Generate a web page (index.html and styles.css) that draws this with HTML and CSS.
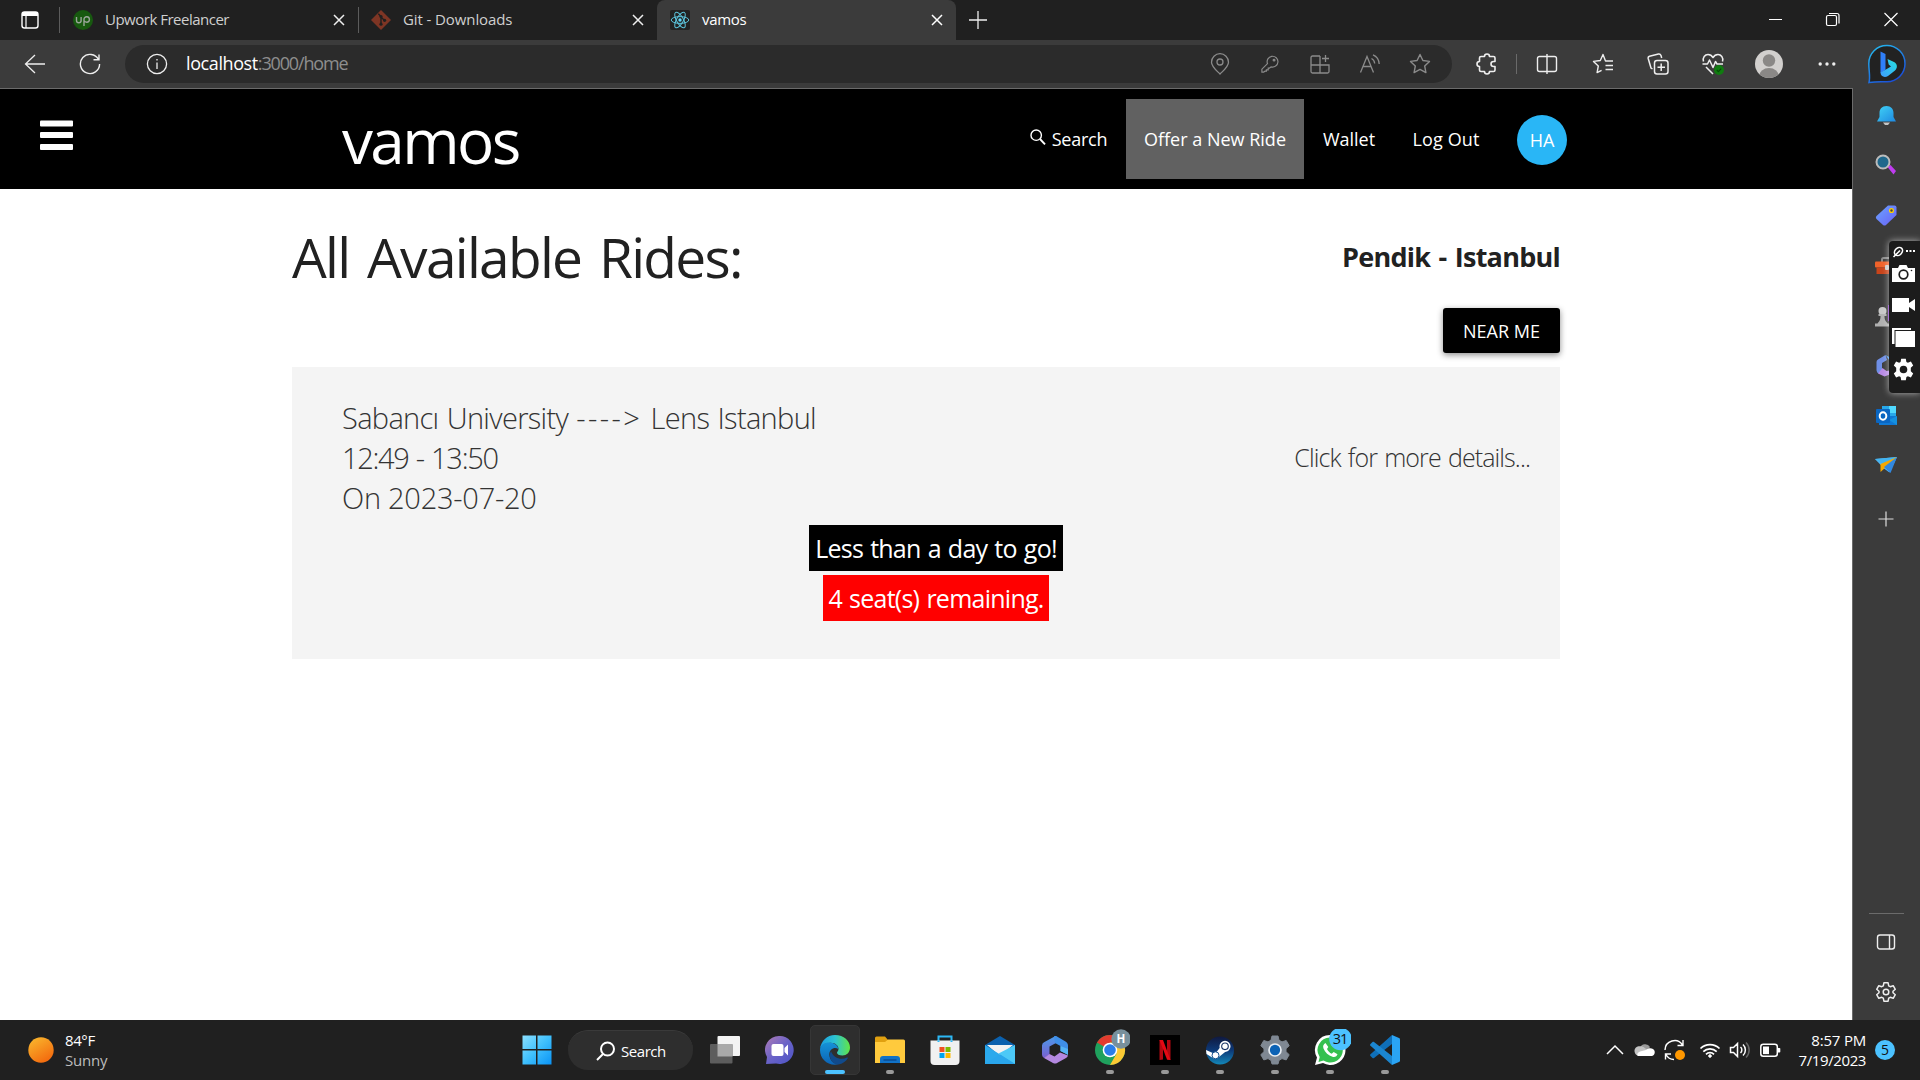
FILE: index.html
```html
<!DOCTYPE html>
<html lang="en">
<head>
<meta charset="utf-8">
<title>vamos</title>
<link rel="stylesheet" href="styles.css">
</head>
<body>
<div class="screen">

  <div class="tabstrip">
    <div class="tab-actions">
      <svg width="20" height="20" viewBox="0 0 20 20"><rect x="2" y="2" width="16" height="16" rx="2.5" fill="none" stroke="#fff" stroke-width="1.4"/><path d="M2 6V4a2 2 0 0 1 2-2h12a2 2 0 0 1 2 2v2z" fill="#fff"/><path d="M6 6v12" stroke="#fff" stroke-width="1.2"/></svg>
    </div>
    <div class="tab tab-first">
      <svg width="20" height="20" viewBox="0 0 20 20"><circle cx="10" cy="10" r="10" fill="#17590f"/><path d="M3.500 7v3.500a2.300 2.300 0 0 0 4.600 0V7M8.100 11.500V7M11 16V9.500a2.700 2.700 0 1 1 2.700 2.700c-1.200 0-2.200-.7-2.700-1.700" fill="none" stroke="#9aa69a" stroke-width="1.400"/></svg>
      <span class="tab-title upwork">Upwork Freelancer</span>
      <svg class="tab-close" width="12" height="12" viewBox="0 0 12 12"><path d="M1 1l10 10M11 1L1 11" stroke="#eee" stroke-width="1.500"/></svg>
    </div>
    <div class="tab tab-second">
      <svg width="20" height="20" viewBox="0 0 20 20"><path d="M10 0l10 10-10 10L0 10z" fill="#7e3524"/><path d="M7.300 3.800L10 6.500v8M10 7l3.500 3.500" stroke="#202020" stroke-width="1.400" fill="none"/><circle cx="10" cy="6.500" r="1.600" fill="#202020"/><circle cx="10" cy="14.200" r="1.600" fill="#202020"/><circle cx="13.600" cy="10.300" r="1.600" fill="#202020"/></svg>
      <span class="tab-title git">Git - Downloads</span>
      <svg class="tab-close" width="12" height="12" viewBox="0 0 12 12"><path d="M1 1l10 10M11 1L1 11" stroke="#eee" stroke-width="1.500"/></svg>
    </div>
    <div class="tab tab-active">
      <svg width="20" height="20" viewBox="0 0 20 20"><rect width="20" height="20" rx="2" fill="#222"/><g fill="none" stroke="#5cc4dc" stroke-width="1"><ellipse cx="10" cy="10" rx="8.800" ry="3.400"/><ellipse cx="10" cy="10" rx="8.800" ry="3.400" transform="rotate(60 10 10)"/><ellipse cx="10" cy="10" rx="8.800" ry="3.400" transform="rotate(120 10 10)"/></g><circle cx="10" cy="10" r="1.700" fill="#61dafb"/></svg>
      <span class="tab-title react">vamos</span>
      <svg class="tab-close" width="12" height="12" viewBox="0 0 12 12"><path d="M1 1l10 10M11 1L1 11" stroke="#fff" stroke-width="1.500"/></svg>
    </div>
    <svg class="new-tab" width="18" height="18" viewBox="0 0 18 18"><path d="M9 0v18M0 9h18" stroke="#eee" stroke-width="1.300"/></svg>
    <div class="window-controls">
      <svg width="58" height="38" viewBox="0 0 58 38"><path d="M23 19.500h13" stroke="#fff"/></svg>
      <svg width="58" height="38" viewBox="0 0 58 38" fill="none" stroke="#fff" stroke-width="1.200"><rect x="22.500" y="15.500" width="10" height="10" rx="1.500"/><path d="M25 13.500h8a2 2 0 0 1 2 2v8"/></svg>
      <svg width="58" height="38" viewBox="0 0 58 38"><path d="M22.500 13l13 13M35.500 13l-13 13" stroke="#fff" stroke-width="1.200"/></svg>
    </div>
  </div>

  <div class="toolbar">
    <div class="cell"><svg width="22" height="22" viewBox="0 0 22 22" fill="none" stroke="#eee" stroke-width="1.300"><path d="M21 11H1.500M11 2l-9.500 9L11 20"/></svg></div>
    <div class="cell"><svg width="22" height="22" viewBox="0 0 22 22" fill="none" stroke="#eee" stroke-width="1.400"><path d="M19.500 6.500A9.600 9.600 0 1 0 20.600 11M20 1.500v5.300h-5.500"/></svg></div>
    <div class="address">
      <svg class="info" width="22" height="22" viewBox="0 0 22 22" fill="none" stroke="#eee" stroke-width="1.300"><circle cx="11" cy="11" r="9.600"/><path d="M11 9.500v6.500M11 6v1.600"/></svg>
      <span class="url"><span class="host">localhost</span><span class="path">:3000/home</span></span>
      <div class="address-icons">
        <div class="icell"><svg width="20" height="22" viewBox="0 0 20 22" fill="none" stroke="#8b8b8b" stroke-width="1.300"><path d="M10 21C6 17 1.500 13.500 1.500 9.200a8.500 8.500 0 0 1 17 0C18.500 13.500 14 17 10 21z"/><circle cx="10" cy="9" r="3"/></svg></div>
        <div class="icell"><svg width="18" height="20" viewBox="0 0 20 20" fill="none" stroke="#8b8b8b" stroke-width="1.300"><path d="M7.200 9.500a6 6 0 1 1 4 3.700L9.500 14.500H8v2H6v1.500H4.500L3 19H1v-3.300z"/><circle cx="14.500" cy="5.700" r="1" fill="#8b8b8b"/></svg></div>
        <div class="icell"><svg width="20" height="20" viewBox="0 0 20 20" fill="none" stroke="#8b8b8b" stroke-width="1.300"><path d="M10 2H2.500A1.500 1.500 0 0 0 1 3.500v14A1.500 1.500 0 0 0 2.500 19h15a1.500 1.500 0 0 0 1.500-1.500V11H1M10 2v17M15.500 1v7M12 4.500h7"/></svg></div>
        <div class="icell"><svg width="22" height="20" viewBox="0 0 22 20" fill="none" stroke="#8b8b8b" stroke-width="1.300"><path d="M1.500 18.500L8 2.500l6.500 16M4 12.500h8M12.500 4.500c2 1 3 2.500 3.200 5M14 .8c4 1.700 6 5 6.200 9.200"/></svg></div>
        <div class="icell"><svg width="22" height="22" viewBox="0 0 22 22" fill="none" stroke="#8b8b8b" stroke-width="1.400" stroke-linejoin="round"><path d="M11 1.500l2.900 6 6.600.9-4.800 4.600 1.200 6.600-5.900-3.200-5.900 3.200L6.300 13 1.500 8.400l6.600-.9z"/></svg></div>
      </div>
    </div>
    <div class="cell puzzle"><svg width="22" height="22" viewBox="0 0 22 22" fill="none" stroke="#eee" stroke-width="1.600" stroke-linejoin="round"><path d="M5 3.500h3.500a2.500 2.500 0 0 1 5 0h4a1.500 1.500 0 0 1 1.500 1.500v3.500h-1.500a2.500 2.500 0 0 0 0 5H19V17a1.500 1.500 0 0 1-1.500 1.500h-4a2.500 2.500 0 0 1-5 0H5A1.500 1.500 0 0 1 3.500 17v-3.500a2.500 2.500 0 0 1 0-5V5A1.500 1.500 0 0 1 5 3.500z"/></svg></div>
    <div class="divider"></div>
    <div class="cell split"><svg width="22" height="22" viewBox="0 0 22 22" fill="none" stroke="#eee" stroke-width="1.400"><path d="M11 3.500H3.500A2 2 0 0 0 1.500 5.500v11a2 2 0 0 0 2 2H11M11 3.500h7.500a2 2 0 0 1 2 2v11a2 2 0 0 1-2 2H11M11 1v20"/></svg></div>
    <div class="cell"><svg width="22" height="22" viewBox="0 0 22 22" fill="none" stroke="#eee" stroke-width="1.400" stroke-linejoin="round"><path d="M18.500 8h-5L11 1.500 8.300 7.500 1.500 8.400l4.800 4.600-1.200 6.600 4.500-2.300M13.500 8H21M13.500 12.500H21M13.500 16.500H21"/></svg></div>
    <div class="cell"><svg width="22" height="22" viewBox="0 0 22 22" fill="none" stroke="#eee" stroke-width="1.500"><rect x="7.500" y="7.500" width="13.500" height="13.500" rx="2.500"/><path d="M14.200 10.500v7.500M10.500 14.200H18M5.500 16L4 15 1.200 5.500C1 4.500 1.500 3.500 2.500 3.200l9-2.200c1-.2 2 .3 2.500 1.500l.7 2.500"/></svg></div>
    <div class="cell"><svg width="24" height="24" viewBox="0 0 24 24" fill="none" stroke="#eee" stroke-width="1.500" stroke-linejoin="round"><path d="M2.500 9.500C1.300 5.500 4 2.500 7 2.500c2.500 0 4 1.300 5 3 1-1.700 2.500-3 5-3 3 0 5.700 3 4.500 7M1.500 12h5l2-4 3.500 7.500 2.500-6 1.500 2.500h6M5 15l7 7"/><circle cx="18" cy="18" r="5" fill="#107c10" stroke="none"/><path d="M15.800 18l1.600 1.600 2.800-2.900" stroke="#064d06" stroke-width="1.200"/></svg></div>
    <div class="cell wide"><svg width="28" height="28" viewBox="0 0 28 28"><clipPath id="av"><circle cx="14" cy="14" r="14"/></clipPath><g clip-path="url(#av)"><rect width="28" height="28" fill="#d2d0ce"/><circle cx="14" cy="10.500" r="6.200" fill="#8a8886"/><ellipse cx="14" cy="26.500" rx="10" ry="8.500" fill="#8a8886"/></g></svg></div>
    <div class="cell dots"><svg width="18" height="4" viewBox="0 0 18 4" fill="#eee"><circle cx="2.200" cy="2" r="1.700"/><circle cx="9" cy="2" r="1.700"/><circle cx="15.800" cy="2" r="1.700"/></svg></div>
    <div class="cell bing"><svg width="40" height="40" viewBox="0 0 40 40"><defs><linearGradient id="bg" x1="0" y1="0" x2=".6" y2="1"><stop offset="0" stop-color="#25c2f2"/><stop offset="1" stop-color="#1b4fd8"/></linearGradient><linearGradient id="bb" x1="0" y1="1" x2="1" y2="0"><stop offset="0" stop-color="#3f9cff"/><stop offset="1" stop-color="#25e0e0"/></linearGradient></defs><path d="M20 1.500a18 18 0 0 1 18 18.200A18 18 0 0 1 20 37.700c-6 0-9-.5-18 .8C3.500 33 1.800 27 1.800 19.700A18 18 0 0 1 20 1.500z" fill="#222" stroke="url(#bg)" stroke-width="1.500"/><path d="M13.500 7.500l5 2.500v16l-5 3z" fill="#2f7ff8"/><path d="M13.500 28.500l5-2.700 5.500-3.300-2.300-2-1.200-5.500 6.500 3c3.500 1.700 3.800 6 1 8.500L21 32c-3.500 2-7.500.5-7.500-3.500z" fill="url(#bb)"/></svg></div>
  </div>

  <div class="main">
    <div class="page">
      <header class="site-header">
        <svg class="burger" width="34" height="34" viewBox="0 0 34 34" fill="#fff"><rect y="1.500" width="33" height="6" rx="1"/><rect y="13" width="33" height="6" rx="1"/><rect y="25" width="33" height="6" rx="1"/></svg>
        <span class="brand">vamos</span>
        <nav class="nav">
          <a class="nav-item search"><svg width="16" height="16" viewBox="0 0 16 16" fill="none" stroke="#fff" stroke-width="1.400"><circle cx="6.200" cy="6.200" r="5.200"/><path d="M10 10l5 5.300" stroke-width="1.900"/></svg><span>Search</span></a>
          <a class="nav-item offer">Offer a New Ride</a>
          <a class="nav-item wallet">Wallet</a>
          <a class="nav-item logout">Log Out</a>
          <span class="avatar">HA</span>
        </nav>
      </header>
      <main class="content">
        <div class="title-row"><h1>All Available Rides:</h1><strong class="location">Pendik - Istanbul</strong></div>
        <div class="actions"><button class="near">NEAR ME</button></div>
        <section class="ride">
          <div class="ride-row">
            <div class="ride-info"><p class="route">Sabancı University <span class="arrow">----&gt;</span> Lens Istanbul</p><p class="time">12:49 - 13:50</p><p class="date">On 2023-07-20</p></div>
            <span class="more">Click for more details...</span>
          </div>
          <div class="badges"><span class="badge soon">Less than a day to go!</span><span class="badge seats">4 seat(s) remaining.</span></div>
        </section>
      </main>
    </div>

    <aside class="sidebar">
      <svg width="24" height="50" viewBox="0 -13 24 50"><defs><linearGradient id="bell" x1="0" y1="0" x2="1" y2="1"><stop offset="0" stop-color="#41d4f7"/><stop offset="1" stop-color="#1e88e0"/></linearGradient></defs><path d="M9 18.500h7l-2 2.500h-3z" fill="#c4c4c4"/><path d="M12.500 2c4.500 0 7 3 7 7v4l2.500 4.500H3L5.500 13V9c0-4 2.500-7 7-7z" fill="url(#bell)"/></svg>
      <svg width="24" height="50" viewBox="0 -12 24 50"><path d="M13.500 14l3-2 5.500 6-2.500 3.500z" fill="#c03cf0"/><circle cx="9" cy="9" r="6.500" fill="#1f688c" stroke="#bcbcbc" stroke-width="2"/></svg>
      <svg width="24" height="50" viewBox="0 -13 24 50"><defs><linearGradient id="tag" x1="0" y1="0" x2="1" y2="1"><stop offset="0" stop-color="#6aa5ff"/><stop offset="1" stop-color="#6a5ff5"/></linearGradient></defs><path d="M14 1.500h6.500a2 2 0 0 1 2 2V11L12 21c-1 .8-2 .8-3 0l-6.500-6c-.8-1-.8-2 0-3z" fill="url(#tag)"/><circle cx="17.500" cy="6.500" r="1.900" fill="#444" stroke="#ffd000" stroke-width="1.300"/></svg>
      <svg width="24" height="50" viewBox="0 -15 24 50"><path d="M8 6V3.500A1.500 1.500 0 0 1 9.500 2h6A1.500 1.500 0 0 1 17 3.500V6" fill="none" stroke="#8c8c8c" stroke-width="2"/><rect x="1" y="5.500" width="22" height="6" rx="1" fill="#f0622a"/><rect x="2.500" y="11.500" width="19" height="6.500" fill="#c8441a"/><rect x="11" y="9" width="4" height="5" rx="1" fill="#ccc"/></svg>
      <svg width="24" height="50" viewBox="0 -14 24 50"><rect x="14" y="0" width="8" height="16" fill="#8a3fc8"/><circle cx="8.500" cy="6" r="4" fill="#c8c8c8"/><path d="M4.500 9h8v2h-2c0 4 1 5 3 7.500h1.500v3H1v-3h2.500c2-2.500 3-3.500 3-7.500h-2z" fill="#b0b0b0"/></svg>
      <svg width="24" height="50" viewBox="0 -13 24 50"><path d="M11.500 1L4 5.500A3 3 0 0 0 2.500 8v8c0 1.500 1 3 2 3.500L8 17V9l5-3z" fill="#6f8fe6"/><path d="M4 19.500l6.500 3 8-3V16l-6 1-4-3z" fill="#b98be6"/><path d="M11.500 1l9 5v8l-4-2V8z" fill="#4d9bf0"/></svg>
      <svg width="24" height="50" viewBox="0 -13 24 50"><rect x="8" y="2" width="14" height="14" fill="#28a8ea"/><rect x="15" y="2" width="7" height="7" fill="#50d9ff"/><path d="M5 12h17l1 1v8H5z" fill="#0f78d4"/><path d="M23 12v9l-8-5z" fill="#1490df"/><rect x="2" y="5" width="14" height="14" rx="1" fill="#0a66c2"/><ellipse cx="9" cy="12" rx="3.300" ry="3.700" fill="none" stroke="#fff" stroke-width="2"/></svg>
      <svg width="24" height="50" viewBox="0 -13 24 50"><path d="M1 5l22-2-7.500 15.500-5.500-4z" fill="#55b8f5"/><path d="M1 5l22-2L9.500 11z" fill="#43b4f0"/><path d="M23 3L6.500 10v8z" fill="#f5a800"/><path d="M23 3L10 13l6.500 6z" fill="#3188e0"/></svg>
      <svg class="side-plus" width="16" height="50" viewBox="0 -17 16 50"><path d="M8 .5v15M.5 8h15" stroke="#ddd" stroke-width="1.200"/></svg>
      <div class="side-bottom">
        <hr>
        <svg width="20" height="50" viewBox="0 -15 20 50" fill="none" stroke="#eee" stroke-width="1.400"><rect x="1.500" y="3" width="17" height="14" rx="2.500"/><path d="M13.500 3v14"/></svg>
        <svg width="22" height="50" viewBox="-1 -15 22 50" fill="none" stroke="#eee" stroke-width="1.500" stroke-linejoin="round"><path d="M7.900.8h4.200l.6 3 1.600.9 2.900-1 2.100 3.600L17 9.300v1.400l2.300 2-2.100 3.600-2.900-1-1.600.9-.6 3H7.900l-.6-3-1.600-.9-2.900 1-2.100-3.600 2.300-2V9.300l-2.300-2 2.100-3.600 2.900 1 1.600-.9z"/><circle cx="10" cy="10" r="2.800"/></svg>
      </div>
      <div class="capture">
        <svg width="23" height="12" viewBox="0 0 23 12"><g fill="none" stroke="#fff" stroke-width="1.600"><ellipse cx="6.500" cy="5.500" rx="4.500" ry="3.500" transform="rotate(-45 6.500 5.500)"/><path d="M1.500 11L8 4.500"/></g><path d="M14 4h2v2h-2zM17.500 4h2v2h-2zM21 4h2v2h-2z" fill="#fff"/></svg>
        <svg width="23" height="18" viewBox="0 0 23 18"><path d="M0 3h6l1.500-3h7L16 3h7v14H0z" fill="#fff"/><circle cx="11.500" cy="9.500" r="4.300" fill="none" stroke="#1c1c1c" stroke-width="1.700"/><circle cx="19.500" cy="5.500" r=".8" fill="#1c1c1c"/></svg>
        <svg width="23" height="16" viewBox="0 0 23 16" fill="#fff"><path d="M0 1h17v14H0zM17 6l6-4v12l-6-4z"/></svg>
        <svg width="23" height="19" viewBox="0 0 23 19"><path d="M0 0h19v2H2.500v14H0z" fill="#fff"/><rect x="3.500" y="3" width="19.500" height="16" fill="#fff"/></svg>
        <svg width="23" height="23" viewBox="-1.500 -1.500 23 23"><path d="M7.700-.8h4.600l.6 3.200 1.500.8 3-1.100 2.300 4L17.300 8.200v3.600l2.400 2.100-2.300 4-3-1.100-1.500.8-.6 3.200H7.700l-.6-3.200-1.500-.8-3 1.100-2.300-4 2.400-2.100V8.200L.3 6.100l2.300-4 3 1.100 1.500-.8z" fill="#fff"/><circle cx="10" cy="10" r="3.800" fill="#1c1c1c"/></svg>
      </div>
    </aside>
  </div>

  <footer class="taskbar">
    <div class="weather">
      <svg width="26" height="26" viewBox="0 0 26 26"><defs><linearGradient id="sun" x1=".2" y1="0" x2=".8" y2="1"><stop offset="0" stop-color="#f9b52c"/><stop offset="1" stop-color="#f3650c"/></linearGradient></defs><circle cx="13" cy="13" r="12.700" fill="url(#sun)"/></svg>
      <div class="weather-text"><span class="temp">84°F</span><span class="cond">Sunny</span></div>
    </div>
    <div class="apps">
      <div class="app start"><svg width="30" height="30" viewBox="0 0 30 30"><defs><linearGradient id="win" x1="0" y1="0" x2="1" y2="1"><stop offset="0" stop-color="#8be0ff"/><stop offset=".5" stop-color="#3fc0fd"/><stop offset="1" stop-color="#0a93f5"/></linearGradient></defs><path d="M.5.500H14V14H.500zM15.500.500H29.500V14H15.500zM.500 15.500H14v14H.500zM15.500 15.500h14v14h-14z" fill="url(#win)"/></svg></div>
      <div class="search-pill"><svg width="20" height="20" viewBox="0 0 20 20" fill="none" stroke="#fff" stroke-width="2"><circle cx="11.500" cy="8" r="6.500"/><path d="M7 13l-6 6"/></svg><span>Search</span></div>
      <div class="app first"><svg width="30" height="30" viewBox="0 0 30 30"><rect x="7.500" y="1" width="22.500" height="20" rx="1" fill="#f3f3f3"/><rect y="9" width="22.500" height="19.500" rx="1" fill="#5d5d5d"/><path d="M7.500 9h15v12.500h-15z" fill="#a9a9a9"/></svg></div>
      <div class="app"><svg width="30" height="30" viewBox="0 0 30 30"><defs><linearGradient id="chat" x1="0" y1="0" x2="1" y2="1"><stop offset="0" stop-color="#b07bb5"/><stop offset=".5" stop-color="#6a63c8"/><stop offset="1" stop-color="#4b53c6"/></linearGradient></defs><path d="M15 1a14 14 0 1 1-4 27.500L1 29l1-7A14 14 0 0 1 15 1z" fill="url(#chat)"/><rect x="6.500" y="9" width="12" height="12" rx="2" fill="#fff"/><path d="M19.500 13l3.500-3.500v11L19.500 17z" fill="#fff"/></svg></div>
      <div class="app current"><svg width="30" height="30" viewBox="0 0 30 30"><defs><linearGradient id="e1" x1="0" y1="0" x2="1" y2="0"><stop offset="0" stop-color="#1b9de2"/><stop offset=".5" stop-color="#2cc3d2"/><stop offset="1" stop-color="#62e545"/></linearGradient><linearGradient id="e2" x1="0" y1="0" x2="0" y2="1"><stop offset="0" stop-color="#1593d8"/><stop offset="1" stop-color="#0c63b5"/></linearGradient></defs><path d="M0 14C1 6 7 0 15 0c9 0 15 6 15 12.500 0 5-3.500 8-7.500 8-3.500 0-5.500-1.500-5.500-2.800 0-1 1.500-1.600 1.500-4 0-3-3-6-8-6C5 7.700 1 10.500 0 14z" fill="url(#e1)"/><path d="M0 15c0-5 4.500-7.500 9-7.500 5.500 0 9 3 9.300 6.500-4-2.500-9 .5-9 5.500 0 5 4 9.500 9.200 9.800C8 31.500 0 24 0 15z" fill="url(#e2)"/><path d="M11 16c-3.500 6 1.500 14 7.500 13.500 4-.5 7.500-3 9.300-6.200.3-.6-.2-1-.8-.7C21 25.500 13 23 11 16z" fill="#114a8b"/></svg><i></i></div>
      <div class="app open"><svg width="30" height="30" viewBox="0 0 30 30"><path d="M0 3a1.500 1.500 0 0 1 1.500-1.500H10l3 3.500v4H0z" fill="#e0a010"/><path d="M0 7h10l3-2.500h15.500A1.500 1.500 0 0 1 30 6v22H0z" fill="#ffca3d"/><path d="M5 28v-4a3 3 0 0 1 3-3h14a3 3 0 0 1 3 3v4z" fill="#1172c8"/><path d="M8.500 25h13" stroke="#0a4d95" stroke-width="1.500"/></svg><i></i></div>
      <div class="app"><svg width="30" height="30" viewBox="0 0 30 30"><path d="M8.500 7V1.500h13V7" fill="none" stroke="#2cb8f5" stroke-width="2"/><path d="M.5 5.500h29V26a4 4 0 0 1-4 4h-21a4 4 0 0 1-4-4z" fill="#f1f1f1"/><path d="M8.500 5.500V7M21.500 5.500V7" stroke="#2cb8f5" stroke-width="2"/><path d="M9.500 12h5v5h-5z" fill="#f25022"/><path d="M15.500 12h5v5h-5z" fill="#7fba00"/><path d="M9.500 18h5v5h-5z" fill="#00a4ef"/><path d="M15.500 18h5v5h-5z" fill="#ffb900"/></svg></div>
      <div class="app"><svg width="30" height="30" viewBox="0 0 30 30"><path d="M0 10L15 1l15 9v10H0z" fill="#0b61ae"/><path d="M2 10h26L15 21z" fill="#f2f2f2"/><path d="M0 10l15 9.500L30 10v19H0z" fill="#2ba9ec"/><path d="M30 10v19L13.500 18.500z" fill="#4cc9f7"/><path d="M0 29l15-9.500L30 29z" fill="#2aa6ec"/></svg></div>
      <div class="app"><svg width="30" height="30" viewBox="0 0 30 30"><defs><linearGradient id="m1" x1="0" y1="0" x2="0" y2="1"><stop offset="0" stop-color="#4a9bea"/><stop offset="1" stop-color="#7a5fd0"/></linearGradient></defs><path d="M15.500 1L4.500 7A4 4 0 0 0 2 10.500v9C2 21 3 22.500 4.500 23l5-3.500v-8L16 8z" fill="url(#m1)"/><path d="M4 23l9 5c1.500.800 3 .8 4 0l9-5c1-.6 1.700-1.500 2-2.500l-8-3-5.500 4-5-2.500z" fill="#b388e0"/><path d="M14 1.500c1-.6 2-.6 3 0l8.500 5c1.500.9 2.500 2.200 2.500 4v9l-7.500-3.500v-5L15 8z" fill="#3f8fe8"/><path d="M20.500 11l7.500 3v6l-7.500-4z" fill="#55b4f5"/></svg></div>
      <div class="app open"><svg width="40" height="36" viewBox="-5 -6 40 36"><circle cx="15" cy="15" r="15" fill="#1fa15d"/><path d="M15 15L2 7.500A15 15 0 0 1 28 7.500H15z" fill="#e33b2e"/><path d="M15 7.500h13A15 15 0 0 1 15 30l6.500-11.200z" fill="#fcc934"/><circle cx="15" cy="15" r="7.300" fill="#fff"/><circle cx="15" cy="15" r="5.800" fill="#2a7de9"/><circle cx="26" cy="4" r="9.700" fill="#78909c"/><text x="26" y="8.300" class="chrome-h">H</text></svg><i></i></div>
      <div class="app open"><svg width="30" height="30" viewBox="0 0 30 30"><path d="M0 0h30v30H0z"/><path d="M9.500 5h3.500v19.500l-3.500.500zM17 5h3.500v20l-3.500-.500z" fill="#b20710"/><path d="M9.500 5H13l7.500 20-3.500-.500z" fill="#e50914"/></svg><i></i></div>
      <div class="app open"><svg width="30" height="30" viewBox="0 0 30 30"><defs><linearGradient id="st" x1="0" y1="0" x2="0" y2="1"><stop offset="0" stop-color="#10193f"/><stop offset=".5" stop-color="#0d3a78"/><stop offset="1" stop-color="#1387b8"/></linearGradient></defs><circle cx="15" cy="15.500" r="14" fill="url(#st)"/><path d="M1 15l9 4 5-6.500 7 3-7.500 6-5 2.500L1.500 19z" fill="#fff"/><circle cx="20" cy="11.300" r="4.700" fill="#173264" stroke="#fff" stroke-width="1.700"/><circle cx="20" cy="11.300" r="2.700" fill="#fff"/><circle cx="10.500" cy="20.300" r="3.500" fill="#fff" stroke="#124d8b"/></svg><i></i></div>
      <div class="app open"><svg width="30" height="30" viewBox="0 0 30 30"><path d="M12 1h6l1 4.200 3 1.700L26.200 5.500l3 5.200-3.200 3v3l3.200 3-3 5.200-4.200-1.300-3 1.700-1 3.700h-6l-1-3.700-3-1.700-4.200 1.300-3-5.200 3.200-3v-3l-3.200-3 3-5.200L8 6.900l3-1.700z" fill="#7f8893" stroke="#7f8893" stroke-linejoin="round"/><circle cx="15" cy="15" r="6" fill="#0b62b5" stroke="#e8edf2" stroke-width="1.700"/></svg><i></i></div>
      <div class="app open"><svg width="42" height="36" viewBox="-6 -6 42 36"><path d="M15 0a15 15 0 1 1-7 28L0 30l2-7.500A15 15 0 0 1 15 0z" fill="#fff"/><path d="M15 2.500a12.500 12.500 0 1 1-6.500 23L3.500 27l1.200-5A12.500 12.500 0 0 1 15 2.500z" fill="#35c04f"/><path d="M10.500 8c-2 1-3 3-2 5.500 1.500 4 5 7 9 8.300 2.500.7 4.500-.5 5-2.500l-3.800-2.300-2 1.700c-2-.8-3.700-2.500-4.700-4.700l1.300-2z" fill="#fff"/><circle cx="25.500" cy="4" r="11.300" fill="#4cc2ff"/><text x="25" y="9.300" class="badge-n">31</text></svg><i></i></div>
      <div class="app open"><svg width="30" height="30" viewBox="0 0 30 30"><path d="M22 0l7 3c.6.300 1 .8 1 1.500v21c0 .700-.4 1.200-1 1.500l-7 3z" fill="#2aa4f4"/><path d="M22 0v9L4 23c-.500.400-1 .300-1.500 0l-2-2c-.6-.600-.6-1.200 0-1.800z" fill="#0f6fb8"/><path d="M22 30v-9L4 7c-.500-.4-1-.3-1.500 0l-2 2c-.6.600-.6 1.200 0 1.800z" fill="#1b86d0"/></svg><i></i></div>
    </div>
    <div class="tray">
      <svg width="28" height="30" viewBox="0 0 28 30"><path d="M6 19l8-8 8 8" fill="none" stroke="#fff" stroke-width="1.500"/></svg>
      <svg width="32" height="30" viewBox="0 0 32 30"><path d="M11 13a5.500 5.500 0 0 1 10-1l-5 6z" fill="#9a9a9a"/><path d="M10 21a5 5 0 0 1-2-9.300c3-1 6-.5 8 1.500l5 3z" fill="#c4c4c4"/><path d="M9 21c-1.500-1-.5-3.500 2-4.500l6-1.500c2-2 5-2.500 7-1 2.500 1.500 2.500 6-1 7z" fill="#fff"/></svg>
      <svg width="28" height="30" viewBox="0 0 28 30" fill="none" stroke="#fff" stroke-width="1.400"><path d="M4 15a9.500 9.500 0 0 1 17.500-5M22 5v5.500h-5.500M4.500 24.500v-5.500H10M5 19.500c1.500 3 4.500 5 8 5"/><circle cx="19" cy="20" r="5" fill="#ff9800" stroke="none"/></svg>
      <svg class="wifi" width="30" height="30" viewBox="0 0 30 30" fill="none" stroke="#fff" stroke-width="1.700"><path d="M5.500 13.500a13.500 13.500 0 0 1 19 0M8.300 16.700a9.500 9.500 0 0 1 13.400 0M11 19.300a5.700 5.700 0 0 1 8 0"/><circle cx="15" cy="21" r="1.300" fill="#fff" stroke-width="1"/></svg>
      <svg width="30" height="30" viewBox="0 0 30 30" fill="none" stroke="#fff" stroke-width="1.500"><path d="M5.500 12.500h3l4-4v13l-4-4h-3zM15.500 12a4 4 0 0 1 0 6M18 9.500a7.500 7.500 0 0 1 0 11"/><path d="M21 7.500a10.500 10.500 0 0 1 0 15" stroke="#666"/></svg>
      <svg width="30" height="30" viewBox="0 0 30 30"><rect x="5.800" y="9.300" width="16.500" height="12" rx="2.500" fill="none" stroke="#fff" stroke-width="1.500"/><rect x="8" y="11.500" width="6" height="7.600" fill="#fff"/><path d="M23 13h1.500q.8 0 .8.800v3q0 .8-.8.800H23z" fill="#fff"/></svg>
      <div class="clock"><span class="hour">8:57 PM</span><span class="day">7/19/2023</span></div>
      <span class="count">5</span>
    </div>
  </footer>
</div>
</body>
</html>
```
FILE: styles.css
```css
* { box-sizing: border-box; }
body { margin: 0; font-family: "Open Sans", "Noto Sans", sans-serif; overflow: hidden; }
svg { display: block; flex: none; }
p, h1 { margin: 0; font-weight: inherit; }
span, a, p, h1, strong, button { white-space: nowrap; }

.screen { width: 1920px; height: 1080px; display: flex; flex-direction: column; background: #3b3b3b; }

/* Tab strip */
.tabstrip { height: 40px; flex: none; display: flex; background: #202020; color: #cfcfcf; font-size: 15px; }
.tab-actions { width: 59px; display: flex; align-items: center; padding-left: 20px; }
.tab { display: flex; align-items: center; }
.tab-title { flex: 1; margin-left: 12px; line-height: 38px; height: 40px; }
.tab-first { width: 299px; padding: 0 13px 0 13px; border-left: 1px solid #5c5c5c; border-image: linear-gradient(transparent 20%, #5c5c5c 20%, #5c5c5c 80%, transparent 80%) 1; }
.tab-second { width: 299px; padding: 0 13px 0 12px; border-left: 1px solid #5c5c5c; border-image: linear-gradient(transparent 20%, #5c5c5c 20%, #5c5c5c 80%, transparent 80%) 1; }
.tab-active { width: 299px; padding: 0 13px; background: #3b3b3b; border-radius: 8px 8px 0 0; color: #fff; }
.upwork { letter-spacing: -.5px; }
.git { letter-spacing: -.1px; }
.react { letter-spacing: -.3px; }
.new-tab { margin: 11px 0 0 13px; }
.window-controls { margin-left: auto; display: flex; }

/* Toolbar */
.toolbar { height: 48px; flex: none; display: flex; align-items: center; padding-left: 7px; }
.cell { width: 55px; height: 48px; display: flex; align-items: center; justify-content: center; }
.cell.split { width: 56px; }
.cell.wide { width: 58px; }
.cell.dots { width: 58px; }
.cell.bing { width: 62px; }
.address { width: 1327px; height: 38px; margin-left: 8px; border-radius: 19px; background: #2b2b2b; display: flex; align-items: center; padding-left: 21px; padding-right: 7px; }
.url { margin-left: 18px; font-size: 18px; line-height: 36px; height: 38px; }
.host { color: #fff; letter-spacing: -.4px; }
.path { color: #8e8e8e; letter-spacing: -1.15px; }
.address-icons { margin-left: auto; display: flex; }
.icell { width: 50px; display: flex; align-items: center; justify-content: center; }
.puzzle { margin-left: 7px; }
.divider { width: 5px; height: 20px; background: linear-gradient(90deg, transparent 2px, #6a6a6a 2px, #6a6a6a 3px, transparent 3px); }

/* Page */
.main { height: 932px; flex: none; display: flex; }
.page { width: 1853px; background: #fff; border-top: 1px solid #6b6b6b; border-right: 1px solid #6b6b6b; }
.site-header { height: 100px; background: #000; color: #fff; display: flex; align-items: center; padding-left: 40px; font-size: 18px; }
.burger { margin-bottom: 6px; }
.brand { margin-left: 268px; font-size: 62px; line-height: 102px; height: 100px; letter-spacing: -2.6px; width: 669px; }
.nav { display: flex; align-items: center; }
.nav-item { height: 80px; display: flex; align-items: center; justify-content: center; }
.search { width: 115px; gap: 6px; letter-spacing: -.25px; }
.search svg { margin-bottom: 5px; }
.offer { width: 178px; background: #616161; }
.wallet { width: 90px; }
.logout { width: 104px; letter-spacing: .15px; }
.avatar { margin: 1px 0 0 19px; width: 50px; height: 50px; border-radius: 50%; background: #29b6f6; display: flex; align-items: center; justify-content: center; }

.content { width: 1268px; margin-left: 292px; padding-top: 38px; color: #212121; }
.title-row { height: 60px; display: flex; align-items: center; justify-content: space-between; }
h1 { font-size: 55px; line-height: 60px; letter-spacing: -1.7px; word-spacing: 5px; }
.location { font-size: 27px; font-weight: 700; letter-spacing: -.75px; word-spacing: 2px; margin-top: -1px; }
.actions { margin-top: 21px; display: flex; justify-content: flex-end; }
.near { width: 117px; height: 45px; border: 0; border-radius: 3px; background: #000; color: #fff; font: 18px "Open Sans", sans-serif; box-shadow: 0 2px 6px rgba(0,0,0,.45); padding: 0; }
.ride { margin-top: 14px; height: 292px; padding: 31px 30px 0 50px; background: #f4f4f4; color: #333; }
.ride-row { display: flex; justify-content: space-between; align-items: center; }
.ride-info { font-size: 29px; font-weight: 300; line-height: 40px; }
.route { letter-spacing: -.68px; word-spacing: 1.4px; }
.arrow { letter-spacing: 2.4px; }
.time { letter-spacing: -1.3px; word-spacing: 1px; }
.date { letter-spacing: -.25px; }
.more { font-size: 25px; font-weight: 300; letter-spacing: -.9px; word-spacing: 1.6px; margin-top: -2px; }
.badges { margin-top: 7px; display: flex; flex-direction: column; align-items: center; gap: 4px; }
.badge { height: 46px; line-height: 47px; color: #fff; font-size: 25px; text-align: center; }
.soon { width: 254px; background: #000; letter-spacing: -.78px; word-spacing: 1.4px; }
.seats { width: 226px; background: #f00; letter-spacing: -.75px; word-spacing: 1.4px; }

/* Browser sidebar */
.sidebar { width: 67px; position: relative; display: flex; flex-direction: column; align-items: center; padding: 3px 1px 0 0; }
.side-plus { margin-top: 3px; }
.side-bottom { margin-top: auto; display: flex; flex-direction: column; align-items: center; padding-bottom: 3px; }
.side-bottom hr { width: 35px; margin: 0 0 3px; border: 0; border-top: 1px solid #6b6b6b; }
/* Floating capture widget over the sidebar */
.capture { position: absolute; right: 0; top: 153px; width: 31px; height: 152px; border-radius: 4px 0 0 4px; background: #1c1c1c; box-shadow: 0 0 7px rgba(255,255,255,.6); display: flex; flex-direction: column; gap: 12px; padding: 5px 0 0 3px; }
.capture svg:nth-child(2) { margin-top: -5px; }
.capture svg:nth-child(3) { margin-top: 2px; }
.capture svg:nth-child(4) { margin-top: 3px; }
.capture svg:nth-child(5) { margin-top: -1px; }

/* Taskbar */
.taskbar { height: 60px; flex: none; display: flex; background: #202020; color: #fff; font-size: 15px; }
.weather { width: 506px; display: flex; align-items: center; padding-left: 28px; }
.weather-text { margin-left: 11px; display: flex; flex-direction: column; line-height: 20px; }
.temp { letter-spacing: -.4px; }
.cond { color: #bdbdbd; letter-spacing: -.2px; }
.apps { display: flex; }
.app { width: 55px; height: 60px; display: flex; align-items: center; justify-content: center; position: relative; }
.start { width: 61px; margin-right: 1px; }
.first { margin-left: 4px; }
.app i { position: absolute; bottom: 6px; width: 8px; height: 4px; border-radius: 2px; background: #999; }
.current::before { content: ""; position: absolute; inset: 5px 2px 5px 3px; border-radius: 5px; background: #2e2e2e; border: 1px solid #363636; }
.current svg { position: relative; }
.current i { width: 20px; background: #4cc2ff; }
.app svg[width="40"], .app svg[width="42"] { margin-bottom: 6px; }
.chrome-h { font: bold 11.5px "Open Sans", sans-serif; fill: #fff; text-anchor: middle; }
.badge-n { font: 14.5px "Open Sans", sans-serif; fill: #111; text-anchor: middle; letter-spacing: -1px; }
.search-pill { width: 125px; height: 40px; margin-top: 10px; border-radius: 20px; background: #2e2e2e; border-top: 1px solid #3a3a3a; display: flex; align-items: center; padding-left: 28px; gap: 5px; letter-spacing: -.45px; }
.tray { margin-left: auto; display: flex; align-items: center; padding-right: 25px; }
.wifi { margin-left: 6px; }
.clock { width: 81px; display: flex; flex-direction: column; text-align: right; line-height: 20px; }
.hour { letter-spacing: -.2px; }
.day { letter-spacing: -.4px; }
.count { margin-left: 9px; width: 20px; height: 20px; border-radius: 50%; background: #4cc2ff; color: #111; font-size: 14px; line-height: 20px; text-align: center; }
```
